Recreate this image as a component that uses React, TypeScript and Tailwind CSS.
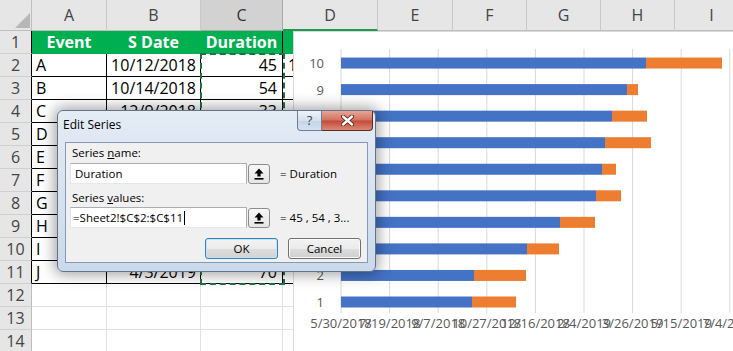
import React from "react";

const colW = ["w-[75px]", "w-[94px]", "w-[82px]", "w-[95px]", "w-[75px]", "w-[74px]", "w-[74px]", "w-[74px]", "w-[74px]"];
const letters = ["A", "B", "C", "D", "E", "F", "G", "H", "I"];
const heads = ["Event", "S Date", "Duration", "E Date"];

const rows = [
  ["A", "10/12/2018", "45", "11/26/2018"],
  ["B", "10/14/2018", "54", "12/7/2018"],
  ["C", "12/9/2018", "33", "1/11/2019"],
  ["D", "1/10/2019", "36", "2/15/2019"],
  ["E", "2/16/2019", "26", "3/14/2019"],
  ["F", "2/22/2019", "14", "3/8/2019"],
  ["G", "2/25/2019", "47", "4/13/2019"],
  ["H", "3/4/2019", "36", "4/9/2019"],
  ["I", "3/20/2019", "11", "3/31/2019"],
  ["J", "4/3/2019", "70", "6/12/2019"],
];

// blue end, orange end (page x) for categories 1..10
const bars = [
  [471, 515], [473, 525], [526, 558], [559, 594], [595, 620],
  [601, 615], [604, 650], [611, 646], [626, 637], [645, 721],
];
const axis = ["5/30/2018", "7/19/2018", "9/7/2018", "10/27/2018", "12/16/2018", "2/4/2019", "3/26/2019", "5/15/2019", "7/4/2019"];

function Cell({ r, c }: { r: number; c: number }) {
  const w = colW[c];
  if (r === 1 && c < 4) {
    return (
      <div className={`${w} shrink-0 h-full flex items-center justify-center bg-[#00b050] border-b border-r ${c === 2 ? "border-r-black border-b-[#00b050]" : "border-[#00b050]"} text-white font-bold text-[16px]`}>
        {heads[c]}
      </div>
    );
  }
  if (r >= 2 && r <= 11 && c < 4) {
    const v = rows[r - 2][c];
    return (
      <div className={`${w} shrink-0 h-full flex items-center border-r border-b border-black text-[16px] text-black whitespace-nowrap overflow-hidden ${c === 0 ? "justify-start pl-[4px]" : c === 2 ? "justify-end pr-[5px]" : "justify-end pr-[4px]"}`}>
        {v}
      </div>
    );
  }
  return <div className={`${w} shrink-0 h-full border-r border-b border-[#e1e1e1]`} />;
}

function UpIcon() {
  return (
    <svg width="10" height="12" viewBox="0 0 10 12">
      <polygon points="5,0.5 9.5,5.5 6.6,5.5 6.6,8.5 3.4,8.5 3.4,5.5 0.5,5.5" fill="#000" />
      <rect x="0.5" y="10" width="9" height="1.6" fill="#000" />
    </svg>
  );
}

function Chart() {
  const gx = (i: number) => 47 + i * 48.6;
  return (
    <div className="absolute left-[293px] top-[31px] w-[440px] h-[320px] bg-white border-l border-t border-[#d9d9d9]">
      <svg width="440" height="320" className="font-['Open_Sans',sans-serif]">
        {axis.map((_, i) => (
          <line key={i} x1={gx(i)} x2={gx(i)} y1={17} y2={281} stroke="#d9d9d9" strokeWidth="1" />
        ))}
        {bars.map(([b, o], k) => {
          const cy = 270 - k * 26.55;
          return (
            <g key={k}>
              <rect x={47} y={cy - 5.5} width={b - 293 - 47} height={11} fill="#4472c4" />
              <rect x={b - 293} y={cy - 5.5} width={o - b} height={11} fill="#ed7d31" />
              <text x={30} y={cy} fontSize="13" fill="#595959" textAnchor="end" dominantBaseline="central">
                {k + 1}
              </text>
            </g>
          );
        })}
        {axis.map((t, i) => (
          <text key={t} x={gx(i)} y={291} fontSize="13" fill="#595959" textAnchor="middle" dominantBaseline="central">
            {t}
          </text>
        ))}
      </svg>
    </div>
  );
}

function Dialog() {
  return (
    <div className="absolute left-[57px] top-[110px] w-[319px] h-[162px] rounded-[6px] border border-[#62748a] bg-[linear-gradient(180deg,#e4ecf5,#cbd9ea)] shadow-[0_0_14px_3px_rgba(0,0,0,0.35)] flex flex-col px-[7px] pb-[8px] font-['Open_Sans',sans-serif] text-black">
      <div className="h-[31px] flex items-start shrink-0">
        <div className="pt-[5px] -ml-[2px] text-[12px] text-black">Edit Series</div>
        <div className="ml-auto -mr-[5px] flex">
          <div className="w-[25px] h-[20px] rounded-bl-[4px] border border-t-0 border-[#6d7f96] bg-[linear-gradient(180deg,#eef3f9,#d4e0ee_50%,#c3d3e6_51%,#d6e2ef)] flex items-center justify-center text-[13px] leading-none text-[#33445a]">
            ?
          </div>
          <div className="w-[51px] h-[20px] rounded-br-[4px] border border-t-0 border-l-0 border-[#5b2a26] bg-[linear-gradient(180deg,#e8a596,#d3705f_48%,#c24a37_52%,#d98a75)] flex items-center justify-center">
            <svg width="13" height="11" viewBox="0 0 13 11">
              <path d="M2 1.5 L11 9.5 M11 1.5 L2 9.5" stroke="#4a1d18" strokeWidth="4" strokeLinecap="round" />
              <path d="M2 1.5 L11 9.5 M11 1.5 L2 9.5" stroke="#fff" strokeWidth="2.4" strokeLinecap="round" />
            </svg>
          </div>
        </div>
      </div>
      <div className="flex-1 bg-[#f0f0f0] border border-[#8499b5] pl-[4px] pr-[6px] pt-[1px] flex flex-col text-[11.5px]">
        <div className="h-[18px] flex items-center pl-[2px] whitespace-pre">
          Series <span className="underline">n</span>ame:
        </div>
        <div className="mt-[1px] flex items-center">
          <div className="w-[177px] h-[21px] bg-white border border-[#abadb3] border-b-[#e3e9ef] border-l-[#e2e3ea] flex items-center pl-[4px]">
            Duration
          </div>
          <div className="ml-[1px] w-[22px] h-[20px] rounded-[3px] border border-[#8c8c8c] bg-[linear-gradient(180deg,#f7f7f7,#e6e6e6)] flex items-center justify-center">
            <UpIcon />
          </div>
          <div className="ml-[10px]">= Duration</div>
        </div>
        <div className="mt-[5px] h-[18px] flex items-center pl-[2px] whitespace-pre">
          Series <span className="underline">v</span>alues:
        </div>
        <div className="flex items-center">
          <div className="w-[177px] h-[21px] bg-white border border-[#abadb3] border-b-[#e3e9ef] border-l-[#e2e3ea] flex items-center pl-[2px]">
            =Sheet2!$C$2:$C$11
            <span className="ml-[1px] w-px h-[14px] bg-black" />
          </div>
          <div className="ml-[1px] w-[22px] h-[20px] rounded-[3px] border border-[#8c8c8c] bg-[linear-gradient(180deg,#f7f7f7,#e6e6e6)] flex items-center justify-center">
            <UpIcon />
          </div>
          <div className="ml-[10px] whitespace-nowrap">= 45 , 54 , 3...</div>
        </div>
        <div className="mt-[10px] flex justify-end gap-[10px]">
          <div className="w-[73px] h-[21px] rounded-[3px] border border-[#3c7fb1] shadow-[inset_0_0_0_1px_#bfe6fa] bg-[linear-gradient(180deg,#f4f4f4,#ebebeb_50%,#dddddd_51%,#d2d2d2)] flex items-center justify-center">
            OK
          </div>
          <div className="w-[73px] h-[21px] rounded-[3px] border border-[#707070] shadow-[inset_0_0_0_1px_#fafafa] bg-[linear-gradient(180deg,#f2f2f2,#ebebeb_50%,#dddddd_51%,#cfcfcf)] flex items-center justify-center">
            Cancel
          </div>
        </div>
      </div>
    </div>
  );
}

export default function App() {
  return (
    <div className="relative w-[733px] h-[351px] overflow-hidden bg-white font-['Open_Sans',sans-serif]">
      <div className="flex flex-col">
        <div className="flex h-[31px]">
          <div className="w-[32px] shrink-0 bg-[#e6e6e6] border-r border-b border-[#bdbdbd] flex items-end justify-end pr-[1px] pb-[2px]">
            <svg width="15" height="15" viewBox="0 0 15 15">
              <polygon points="15,0 15,15 0,15" fill="#b7b7b7" />
            </svg>
          </div>
          {letters.map((l, i) => (
            <div
              key={l}
              className={`${colW[i]} shrink-0 flex items-center justify-center border-r text-[16px] ${
                l === "C" ? "bg-[#d2d2d2] text-[#333] border-[#a8a8a8] border-b border-b-[#a8a8a8]" : "bg-[#e6e6e6] text-[#444] border-[#c8c8c8]"
              } ${l === "D" ? "border-b-2 border-b-[#1f9a4c]" : l === "C" ? "" : "border-b border-b-[#bdbdbd]"}`}
            >
              {l}
            </div>
          ))}
        </div>
        {Array.from({ length: 14 }, (_, i) => i + 1).map((r) => (
          <div key={r} className="flex h-[23px]">
            <div className={`w-[32px] shrink-0 bg-[#e6e6e6] border-b border-[#d0d0d0] border-r ${r <= 11 ? "border-r-black" : "border-r-[#bdbdbd]"} flex items-center justify-center text-[16px] text-[#444]`}>
              {r}
            </div>
            {letters.map((_, c) => (
              <Cell key={c} r={r} c={c} />
            ))}
          </div>
        ))}
      </div>
      <div className="absolute left-[200px] top-[53px] w-[85px] h-[232px] border-2 border-dashed border-[#1e7145]" />
      <Chart />
      <Dialog />
    </div>
  );
}
